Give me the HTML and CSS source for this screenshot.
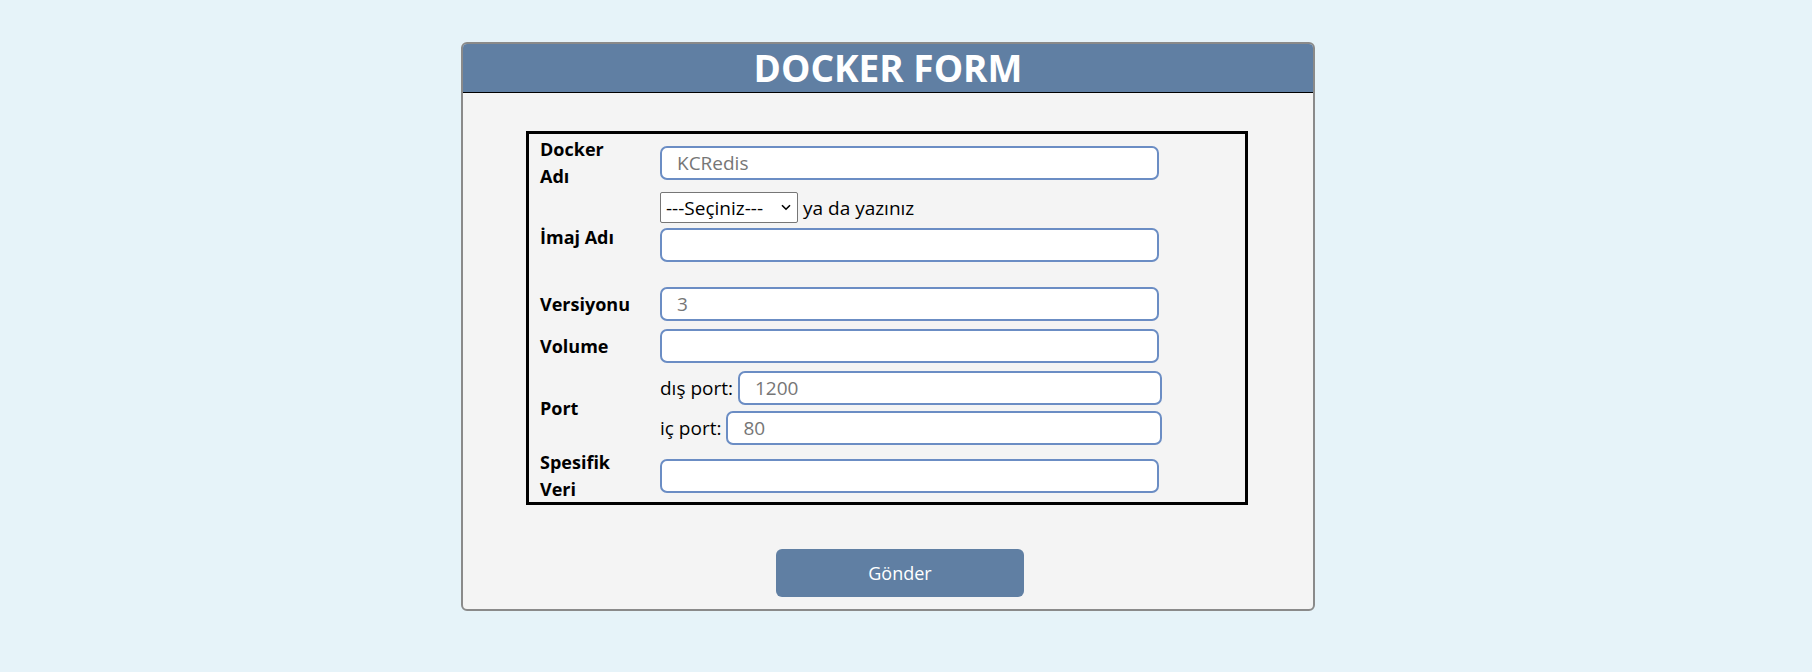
FILE: index.html
```html
<!DOCTYPE html>
<html lang="tr">
<head>
<meta charset="utf-8">
<title>Docker Form</title>
<link rel="stylesheet" href="styles.css">
</head>
<body>
<div class="card">
  <h1 class="card-title">DOCKER FORM</h1>
  <form class="card-body">
    <div class="form-table">
      <div class="row row-first">
        <div class="label">Docker Adı</div>
        <div class="field"><input class="text-input" type="text" placeholder="KCRedis"></div>
      </div>
      <div class="row row-image">
        <div class="label">İmaj Adı</div>
        <div class="field">
          <div class="select-line">
            <span class="select-wrap">
              <select class="select">
                <option>---Seçiniz---</option>
              </select>
              <svg class="chevron" width="10" height="7" viewBox="0 0 10 7"><path d="M1 1.2 L5 5.2 L9 1.2" fill="none" stroke="#000" stroke-width="1.6"/></svg>
            </span>
            <span class="hint">ya da yazınız</span>
          </div>
          <input class="text-input image-input" type="text">
          <div class="blank-line"></div>
        </div>
      </div>
      <div class="row">
        <div class="label">Versiyonu</div>
        <div class="field"><input class="text-input" type="text" placeholder="3"></div>
      </div>
      <div class="row">
        <div class="label">Volume</div>
        <div class="field"><input class="text-input" type="text"></div>
      </div>
      <div class="row">
        <div class="label">Port</div>
        <div class="field">
          <div class="port-line">
            <span class="port-text">dış port:</span>
            <input class="text-input port-input" type="text" placeholder="1200">
          </div>
          <div class="port-line port-line-second">
            <span class="port-text">iç port:</span>
            <input class="text-input port-input" type="text" placeholder="80">
          </div>
        </div>
      </div>
      <div class="row row-last">
        <div class="label">Spesifik Veri</div>
        <div class="field"><input class="text-input" type="text"></div>
      </div>
    </div>
    <button class="submit" type="button">Gönder</button>
  </form>
</div>
</body>
</html>
```

FILE: styles.css
```css
body {
  margin: 0;
  background: #e6f3f9;
  font-family: "Open Sans", "Noto Sans", sans-serif;
  color: #000;
}

.card {
  width: 854px;
  box-sizing: border-box;
  margin: 42px 0 0 461px;
  border: 2px solid #8a8a8a;
  border-radius: 6px;
  background: #f4f4f4;
  overflow: hidden;
  padding-bottom: 12px;
}

.card-title {
  margin: 0;
  height: 48px;
  line-height: 48px;
  background: #607fa3;
  color: #fff;
  font-size: 37px;
  font-weight: 700;
  text-align: center;
  border-bottom: 1px solid #000;
}

.card-body {
  margin: 0;
}

.form-table {
  width: 722px;
  box-sizing: border-box;
  border: 3px solid #000;
  margin: 38px 0 0 63px;
}

.row {
  display: flex;
  align-items: center;
  padding: 4px 0;
}

.row-first {
  padding: 2px 0;
}

.row-image {
  padding: 1px 0;
}

.row-last {
  padding: 0;
}

.label {
  width: 131px;
  flex: none;
  box-sizing: border-box;
  padding: 0 29px 0 11px;
  font-size: 18px;
  font-weight: 700;
  line-height: 26.6px;
}

.field {
  display: flex;
  flex-direction: column;
  align-items: flex-start;
}

.text-input {
  width: 499px;
  height: 34px;
  box-sizing: border-box;
  border: 2px solid #6b8dc4;
  border-radius: 7px;
  padding: 0 15px;
  background: #fff;
  font-family: "Open Sans", "Noto Sans", sans-serif;
  font-size: 19px;
  color: #000;
  outline: none;
}

.text-input::placeholder {
  color: #767676;
}

.select-line {
  display: flex;
  align-items: center;
  height: 31px;
}

.select-wrap {
  position: relative;
  display: inline-block;
}

.select {
  -webkit-appearance: none;
  appearance: none;
  width: 138px;
  height: 31px;
  box-sizing: border-box;
  border: 1px solid #767676;
  border-radius: 2px;
  background: #fff;
  padding: 0 0 0 5px;
  font-family: "Open Sans", "Noto Sans", sans-serif;
  font-size: 19px;
  color: #000;
}

.chevron {
  position: absolute;
  right: 7px;
  top: 12px;
  pointer-events: none;
}

.hint {
  margin-left: 5px;
  font-size: 19px;
}

.image-input {
  margin-top: 5px;
}

.blank-line {
  height: 20px;
}

.port-line {
  display: flex;
  align-items: center;
  gap: 5px;
  width: 502px;
}

.port-line-second {
  margin-top: 6px;
}

.port-text {
  font-size: 19px;
  white-space: nowrap;
}

.port-input {
  flex: 1;
  width: auto;
  min-width: 0;
}

.submit {
  display: block;
  width: 248px;
  height: 48px;
  margin: 44px 0 0 313px;
  background: #607fa3;
  color: #fff;
  border: none;
  border-radius: 6px;
  font-family: "Open Sans", "Noto Sans", sans-serif;
  font-size: 18px;
  cursor: pointer;
}
```
